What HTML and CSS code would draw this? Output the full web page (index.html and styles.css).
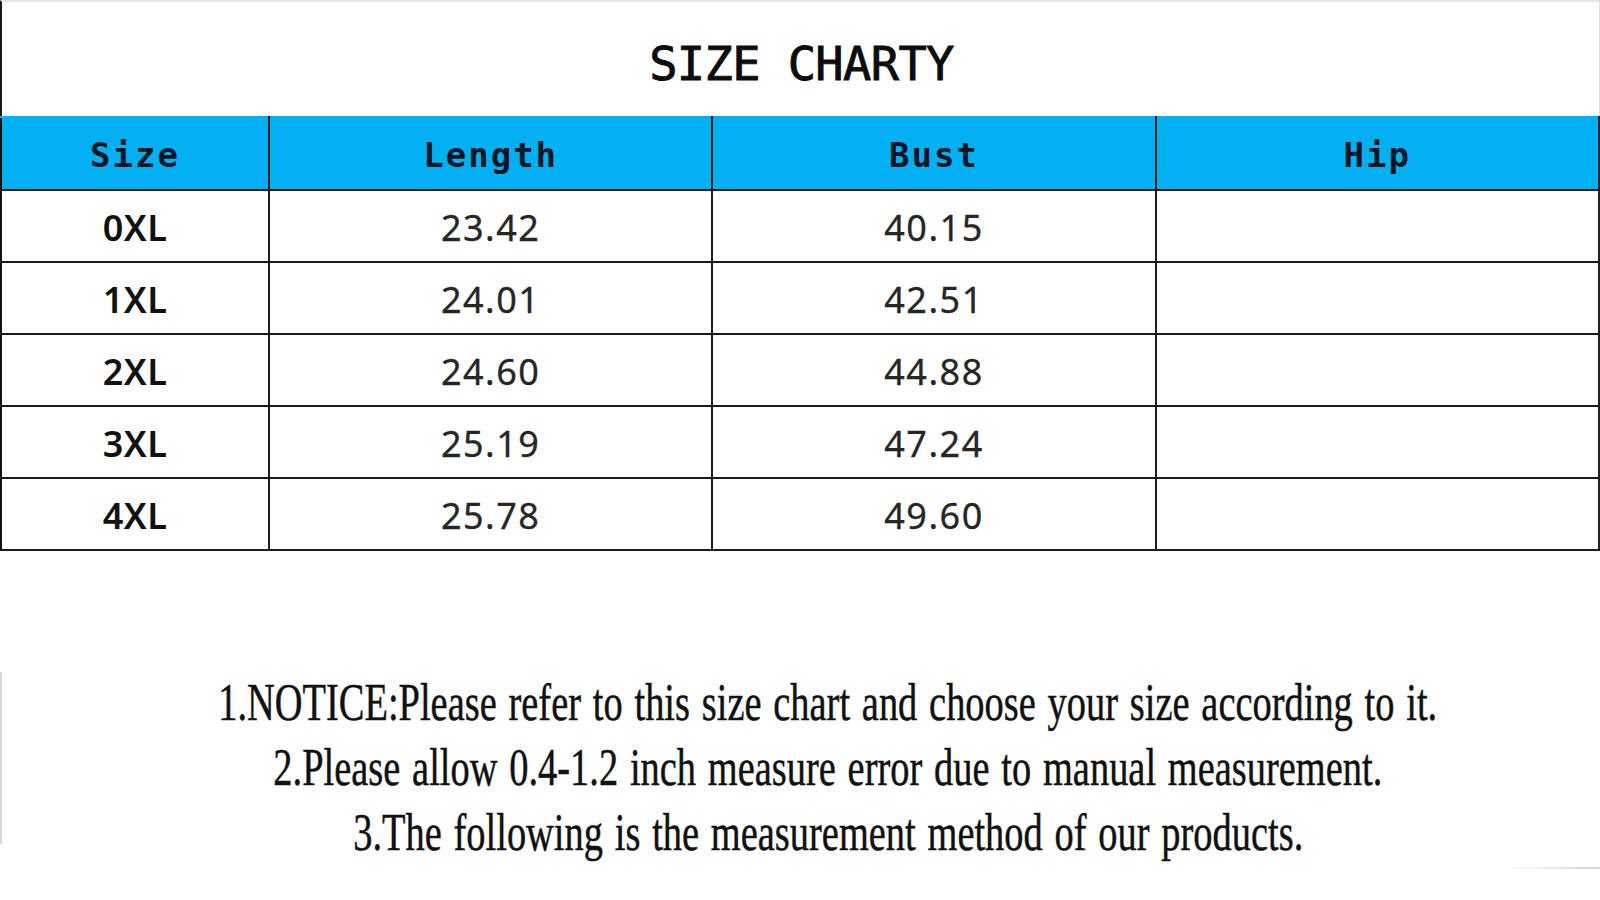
FILE: index.html
```html
<!DOCTYPE html>
<html>
<head>
<meta charset="utf-8">
<link rel="stylesheet" href="styles.css">
</head>
<body>
<div class="page">
  <header class="title-box">
    <h1 class="title">SIZE CHARTY</h1>
  </header>
  <table class="chart">
    <colgroup>
      <col class="c-size">
      <col><col><col>
    </colgroup>
    <thead>
      <tr><th>Size</th><th>Length</th><th>Bust</th><th>Hip</th></tr>
    </thead>
    <tbody>
      <tr><td class="sz">0XL</td><td>23.42</td><td>40.15</td><td></td></tr>
      <tr><td class="sz">1XL</td><td>24.01</td><td>42.51</td><td></td></tr>
      <tr><td class="sz">2XL</td><td>24.60</td><td>44.88</td><td></td></tr>
      <tr><td class="sz">3XL</td><td>25.19</td><td>47.24</td><td></td></tr>
      <tr><td class="sz">4XL</td><td>25.78</td><td>49.60</td><td></td></tr>
    </tbody>
  </table>
  <section class="notes">
    <p class="note"><span>1.NOTICE:Please refer to this size chart and choose your size according to it.</span></p>
    <p class="note"><span>2.Please allow 0.4-1.2 inch measure error due to manual measurement.</span></p>
    <p class="note"><span>3.The following is the measurement method of our products.</span></p>
  </section>
  <div class="edge-left"></div>
  <div class="edge-bottom"></div>
</div>
</body>
</html>
```
FILE: styles.css
```css
html, body {
  margin: 0;
  padding: 0;
  background: #ffffff;
}
.page {
  position: relative;
  width: 1600px;
  height: 900px;
  overflow: hidden;
}
.title-box {
  height: 114px;
  border-top: 2px solid #e6e6e6;
  border-left: 2px solid #1a1a1a;
  border-right: 1px solid #e0e0e0;
  display: flex;
  align-items: center;
  justify-content: center;
  box-sizing: content-box;
}
.title {
  margin: 0;
  padding-left: 2px;
  padding-top: 8px;
  font-family: "DejaVu Sans Mono", monospace;
  font-weight: normal;
  -webkit-text-stroke: 0.9px #0c0c0c;
  font-size: 47px;
  letter-spacing: -0.6px;
  color: #0c0c0c;
  line-height: 1;
}
.chart {
  width: 1600px;
  border-collapse: collapse;
  table-layout: fixed;
}
.c-size { width: 268px; }
.chart th, .chart td {
  border: 2px solid #1c1c1c;
  text-align: center;
  padding: 0;
}
.chart th {
  height: 68px;
  padding-top: 3px;
  background: #00b0f0;
  font-family: "DejaVu Sans Mono", monospace;
  font-weight: bold;
  font-size: 34px;
  letter-spacing: 2px;
  color: #0a1626;
  border-top: 2px solid #00b0f0;
}
.chart td {
  height: 68px;
  font-family: "Noto Sans", "Open Sans", sans-serif;
  font-size: 36px;
  letter-spacing: 1.5px;
  color: #262626;
  padding-top: 2px;
  -webkit-text-stroke: 0.3px #262626;
}
.chart td.sz {
  font-weight: 600;
  color: #111111;
  letter-spacing: 0.5px;
  -webkit-text-stroke: 0;
}
.chart tr > :first-child { border-left: 2px solid #111; }
.chart tr > :last-child { border-right: 2px solid #222; }
.notes {
  padding-top: 119px;
  padding-left: 56px;
}
.note {
  margin: 0;
  height: 65px;
  display: flex;
  justify-content: center;
  align-items: center;
  font-family: "Liberation Serif", serif;
  font-size: 53px;
  line-height: 65px;
  color: #111111;
  white-space: nowrap;
  -webkit-text-stroke: 0.5px #111111;
}
.note span {
  flex: none;
  display: inline-block;
  transform: scaleX(0.725);
  transform-origin: center;
  word-spacing: 3px;
}
.edge-left {
  position: absolute;
  left: 0;
  top: 672px;
  width: 2px;
  height: 172px;
  background: #d8d8d8;
}
.edge-bottom {
  position: absolute;
  right: 0;
  top: 867px;
  width: 90px;
  height: 2px;
  background: linear-gradient(to right, rgba(210,210,210,0), #d4d4d4);
}
```
